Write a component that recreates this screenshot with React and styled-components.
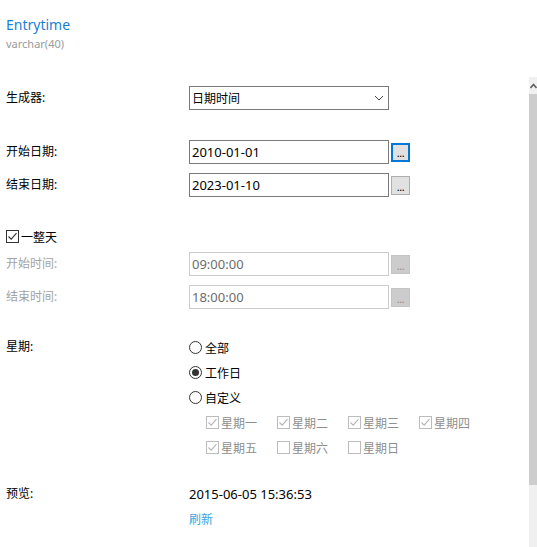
import React from 'react';
import styled, { createGlobalStyle } from 'styled-components';

const GlobalStyle = createGlobalStyle`
  html, body {
    margin: 0;
    padding: 0;
    background: #ffffff;
  }
  body {
    font-family: "Segoe UI", "Noto Sans", "Noto Sans CJK SC", sans-serif;
    font-size: 12px;
    color: #000;
  }
`;

const Page = styled.div`
  width: 537px;
  height: 547px;
  display: flex;
  flex-direction: column;
  overflow: hidden;
`;

const Header = styled.div`
  padding: 15px 0 0 6px;
  height: 77px;
  flex: none;
  box-sizing: border-box;
`;

const Title = styled.div`
  font-size: 14px;
  line-height: 20px;
  color: #1a7fd4;
`;

const SubTitle = styled.div`
  font-size: 11px;
  line-height: 16px;
  color: #9a9a9a;
  margin-top: 1px;
`;

const ScrollArea = styled.div`
  flex: 1;
  display: flex;
  min-height: 0;
`;

const Body = styled.div`
  flex: 1;
  padding: 9px 0 0 6px;
  display: flex;
  flex-direction: column;
`;

const Scrollbar = styled.div`
  width: 8px;
  display: flex;
  flex-direction: column;
  background: #f0f0f0;
`;

const ScrollArrow = styled.div`
  height: 17px;
  display: flex;
  align-items: center;
  padding-left: 1px;
`;

const ScrollThumb = styled.div`
  height: 391px;
  background: #cdcdcd;
`;

const Row = styled.div`
  display: flex;
  align-items: ${p => p.$align || 'center'};
  height: ${p => p.$h || 24}px;
  margin-top: ${p => p.$mt || 0}px;
`;

const Label = styled.div`
  width: 183px;
  flex: none;
  color: ${p => (p.$disabled ? '#a3a3a3' : '#000')};
  line-height: 16px;
  margin-top: ${p => p.$mt || 0}px;
`;

const Select = styled.div`
  width: 200px;
  height: 24px;
  box-sizing: border-box;
  border: 1px solid #7a7a7a;
  display: flex;
  align-items: center;
  justify-content: space-between;
  padding: 0 4px 0 2px;
  background: #fff;
`;

const Field = styled.div`
  display: flex;
  align-items: center;
  gap: 2px;
`;

const Input = styled.div`
  width: 200px;
  height: 24px;
  box-sizing: border-box;
  border: 1px solid ${p => (p.$disabled ? '#cccccc' : '#7a7a7a')};
  color: ${p => (p.$disabled ? '#6d6d6d' : '#000')};
  font-size: 13px;
  display: flex;
  align-items: center;
  padding-left: 2px;
  background: #fff;
`;

const DotsButton = styled.div`
  width: 19px;
  height: 19px;
  box-sizing: border-box;
  border: ${p => (p.$focused ? '2px solid #0078d7' : p.$disabled ? '1px solid #c4c4c4' : '1px solid #adadad')};
  background: ${p => (p.$disabled ? '#cccccc' : '#e1e1e1')};
  color: ${p => (p.$disabled ? '#8c8c8c' : '#000')};
  display: flex;
  align-items: flex-end;
  justify-content: center;
  font-size: 11px;
  line-height: 13px;
  letter-spacing: -0.5px;
  padding-bottom: 1px;
`;

const CheckRow = styled.label`
  display: flex;
  align-items: center;
  gap: 2px;
  color: ${p => (p.$disabled ? '#8e8e8e' : '#000')};
  width: ${p => p.$w || 'auto'};
`;

const Box = styled.span`
  width: 13px;
  height: 13px;
  box-sizing: border-box;
  border: 1px solid ${p => (p.$disabled ? '#bcbcbc' : '#333333')};
  background: #fff;
  display: flex;
  align-items: center;
  justify-content: center;
  flex: none;
`;

const Radio = styled.span`
  width: 13px;
  height: 13px;
  box-sizing: border-box;
  border: 1px solid #333333;
  border-radius: 50%;
  display: flex;
  align-items: center;
  justify-content: center;
  flex: none;
  margin-right: 3px;
  &::after {
    content: '';
    width: 7px;
    height: 7px;
    border-radius: 50%;
    background: ${p => (p.$checked ? '#333333' : 'transparent')};
  }
`;

const Options = styled.div`
  display: flex;
  flex-direction: column;
`;

const OptionLine = styled.div`
  display: flex;
  align-items: center;
  height: 25px;
  padding-left: ${p => p.$indent || 0}px;
`;

const Preview = styled.span`
  font-size: 13px;
`;

const Link = styled.span`
  color: #3ba3e2;
  cursor: pointer;
`;

const Check = ({ color }) => (
  <svg width="11" height="11" viewBox="0 0 11 11">
    <path d="M1.5 5.5 L4.2 8.2 L9.5 2.2" fill="none" stroke={color} strokeWidth="1.1" />
  </svg>
);

const CheckBox = ({ checked, disabled, children, width }) => (
  <CheckRow $disabled={disabled} $w={width}>
    <Box $disabled={disabled}>
      {checked && <Check color={disabled ? '#b5b5b5' : '#333333'} />}
    </Box>
    {children}
  </CheckRow>
);

const Chevron = () => (
  <svg width="10" height="6" viewBox="0 0 10 6">
    <path d="M1 1 L5 5 L9 1" fill="none" stroke="#444" strokeWidth="1" />
  </svg>
);

const days = [
  ['星期一', true],
  ['星期二', true],
  ['星期三', true],
  ['星期四', true],
  ['星期五', true],
  ['星期六', false],
  ['星期日', false],
];

const DateField = ({ value, focused, disabled }) => (
  <Field>
    <Input $disabled={disabled}>{value}</Input>
    <DotsButton $focused={focused} $disabled={disabled}>...</DotsButton>
  </Field>
);

export default function App() {
  return (
    <Page>
      <GlobalStyle />
      <Header>
        <Title>Entrytime</Title>
        <SubTitle>varchar(40)</SubTitle>
      </Header>
      <ScrollArea>
        <Body>
          <Row>
            <Label>生成器:</Label>
            <Select>
              <span>日期时间</span>
              <Chevron />
            </Select>
          </Row>

          <Row $mt={30}>
            <Label>开始日期:</Label>
            <DateField value="2010-01-01" focused />
          </Row>
          <Row $mt={9}>
            <Label>结束日期:</Label>
            <DateField value="2023-01-10" />
          </Row>

          <Row $h={13} $mt={33}>
            <CheckBox checked>一整天</CheckBox>
          </Row>
          <Row $mt={9}>
            <Label $disabled>开始时间:</Label>
            <DateField value="09:00:00" disabled />
          </Row>
          <Row $mt={9}>
            <Label $disabled>结束时间:</Label>
            <DateField value="18:00:00" disabled />
          </Row>

          <Row $h={125} $mt={26} $align="flex-start">
            <Label $mt={4}>星期:</Label>
            <Options>
              <OptionLine><Radio />全部</OptionLine>
              <OptionLine><Radio $checked />工作日</OptionLine>
              <OptionLine><Radio />自定义</OptionLine>
              <OptionLine $indent={17}>
                {days.slice(0, 4).map(([d, c]) => (
                  <CheckBox key={d} checked={c} disabled width="71px">{d}</CheckBox>
                ))}
              </OptionLine>
              <OptionLine $indent={17}>
                {days.slice(4).map(([d, c]) => (
                  <CheckBox key={d} checked={c} disabled width="71px">{d}</CheckBox>
                ))}
              </OptionLine>
            </Options>
          </Row>

          <Row $h={25} $mt={21}>
            <Label>预览:</Label>
            <Preview>2015-06-05 15:36:53</Preview>
          </Row>
          <Row $h={25}>
            <Label />
            <Link>刷新</Link>
          </Row>
        </Body>
        <Scrollbar>
          <ScrollArrow>
            <svg width="7" height="6" viewBox="0 0 7 6">
              <path d="M0.5 5 L3.5 1.5 L6.5 5" fill="none" stroke="#606060" strokeWidth="1.6" />
            </svg>
          </ScrollArrow>
          <ScrollThumb />
        </Scrollbar>
      </ScrollArea>
    </Page>
  );
}
